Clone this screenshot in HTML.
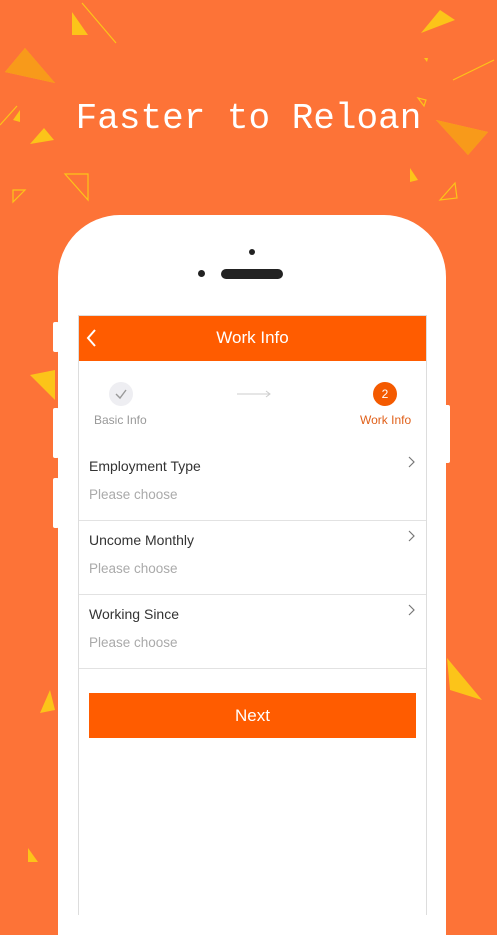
<!DOCTYPE html>
<html><head><style>
*{margin:0;padding:0;box-sizing:border-box}
body{width:497px;height:883px;overflow:hidden;background:#FD7337;position:relative;font-family:"Liberation Sans",sans-serif}
.abs{position:absolute}
.title{left:0;width:497px;top:98px;text-align:center;color:#fff;font-family:"Liberation Mono","DejaVu Sans Mono",monospace;font-size:36px;letter-spacing:0px;font-weight:normal}
.phone{left:58px;top:215px;width:388px;height:720px;background:#fff;border-radius:62px 62px 0 0}
.btn{background:#fff;border-radius:2px}
.screen{left:78px;top:315px;width:349px;height:600px;background:#fff;border-left:1px solid #ddd;border-right:1px solid #ddd;border-top:1px solid #ddd}
.hdr{left:0;top:0;width:347px;height:45px;background:#FF5C00;color:#fff;font-size:17px;text-align:center;line-height:43px}
.lbl{font-size:14px;color:#333}
.ph{font-size:13.5px;color:#aaa}
.div{height:1px;background:#e2e2e2;left:0;width:347px}
</style></head><body>
<svg class="abs" style="left:0;top:0" width="497" height="883">
<g fill="#FCC419">
<polygon points="72,12 72,35 88,35"/>
<polygon points="5,72 25,48 55,83"/>
<polygon points="30,144 44,128 54,140"/>
<polygon points="13,120 20,110 20,122"/>
<polygon points="421,33 440,10 455,20"/>
<polygon points="436,120 488,132 468,155"/>
<polygon points="410,168 410,182 418,180"/>
<polygon points="424,58 428,58 427,62"/>
<polygon points="447,658 450,690 482,700"/>
<polygon points="40,713 50,690 55,710"/>
<polygon points="28,848 28,862 38,862"/>
<polygon points="30,375 55,370 55,400"/>
</g>
<g fill="#F7961B" opacity=".9">
<polygon points="5,72 25,48 55,83"/>
<polygon points="436,120 488,132 468,155"/>
</g>
<g fill="none" stroke="#FCC419" stroke-width="1.2">
<polygon points="65,174 88,174 88,200"/>
<polygon points="13,190 25,190 13,202"/>
<polygon points="440,200 455,183 457,198"/>
<polygon points="418,98 426,100 424,106"/>
<line x1="82" y1="3" x2="116" y2="43"/>
<line x1="453" y1="80" x2="494" y2="60"/>
<line x1="0" y1="125" x2="17" y2="106"/>
</g>
</svg>
<div class="abs title">Faster to Reloan</div>
<div class="abs btn" style="left:53px;top:322px;width:6px;height:30px"></div>
<div class="abs btn" style="left:53px;top:408px;width:6px;height:50px"></div>
<div class="abs btn" style="left:53px;top:478px;width:6px;height:50px"></div>
<div class="abs btn" style="left:444px;top:405px;width:6px;height:58px"></div>
<div class="abs phone"></div>
<div class="abs" style="left:249px;top:249px;width:6px;height:6px;border-radius:50%;background:#222"></div>
<div class="abs" style="left:198px;top:270px;width:7px;height:7px;border-radius:50%;background:#222"></div>
<div class="abs" style="left:221px;top:269px;width:62px;height:10px;border-radius:5px;background:#222"></div>
<div class="abs screen">
 <div class="abs hdr">Work Info</div>
 <svg class="abs" style="left:6px;top:12px" width="14" height="20"><polyline points="10,2 3,10 10,18" fill="none" stroke="#fff" stroke-width="2"/></svg>
 <div class="abs" style="left:30px;top:66px;width:24px;height:24px;border-radius:50%;background:#eeeef2"></div>
 <svg class="abs" style="left:36px;top:72px" width="12" height="12"><polyline points="1,6 5,10 11,2" fill="none" stroke="#999" stroke-width="1.4"/></svg>
 <div class="abs" style="left:15px;top:97px;font-size:12px;color:#999">Basic Info</div>
 <svg class="abs" style="left:158px;top:73px" width="36" height="10"><line x1="0" y1="5" x2="33" y2="5" stroke="#ccc"/><polyline points="29,2 33,5 29,8" fill="none" stroke="#ccc"/></svg>
 <div class="abs" style="left:294px;top:66px;width:24px;height:24px;border-radius:50%;background:#F45A00;color:#fff;font-size:12px;text-align:center;line-height:24px">2</div>
 <div class="abs" style="left:281px;top:97px;font-size:12px;color:#E0601A">Work Info</div>

 <div class="abs lbl" style="left:10px;top:142px">Employment Type</div>
 <div class="abs ph" style="left:10px;top:171px">Please choose</div>
 <svg class="abs" style="left:329px;top:140px" width="8" height="12"><polyline points="1,1 6,6 1,11" fill="none" stroke="#777" stroke-width="1.2"/></svg>
 <div class="abs div" style="top:204px"></div>
 <div class="abs lbl" style="left:10px;top:216px">Uncome Monthly</div>
 <div class="abs ph" style="left:10px;top:245px">Please choose</div>
 <svg class="abs" style="left:329px;top:214px" width="8" height="12"><polyline points="1,1 6,6 1,11" fill="none" stroke="#777" stroke-width="1.2"/></svg>
 <div class="abs div" style="top:278px"></div>
 <div class="abs lbl" style="left:10px;top:290px">Working Since</div>
 <div class="abs ph" style="left:10px;top:319px">Please choose</div>
 <svg class="abs" style="left:329px;top:288px" width="8" height="12"><polyline points="1,1 6,6 1,11" fill="none" stroke="#777" stroke-width="1.2"/></svg>
 <div class="abs div" style="top:352px"></div>
 <div class="abs" style="left:10px;top:377px;width:327px;height:45px;background:#FF5C00;color:#fff;font-size:17px;text-align:center;line-height:45px">Next</div>
</div>
</body></html>
